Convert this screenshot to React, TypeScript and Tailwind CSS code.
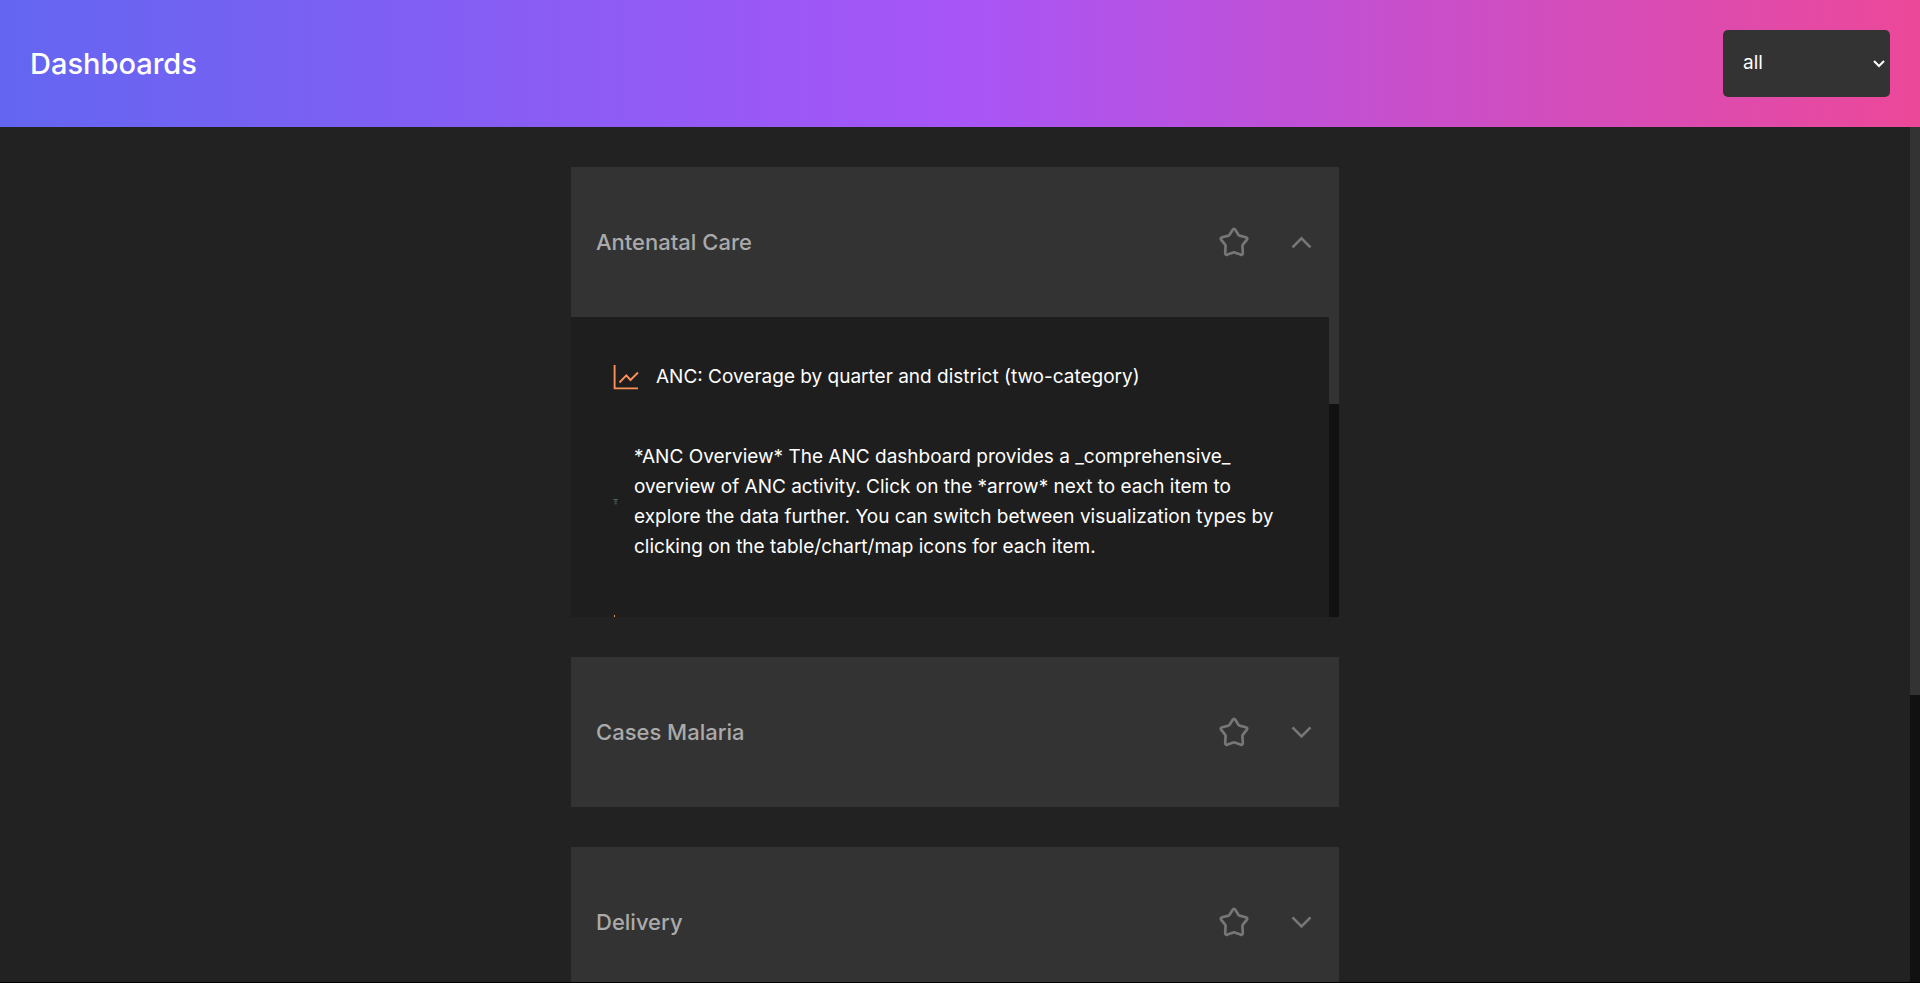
import { useState } from 'react';
import type { ReactNode } from 'react';

function StarIcon() {
  return (
    <svg viewBox="0 0 30 30" className="size-[30px]" fill="none" stroke="currentColor" strokeWidth="2.7" strokeLinejoin="round" aria-hidden="true">
      <path d="M13.7 2.7Q15 .8 16.3 2.7L19.4 7.7Q19.8 8.4 20.5 8.6L26.8 10.2Q29.2 10.9 27.7 12.9L23.9 17.7Q23.4 18.3 23.4 19L23.8 25.8Q23.8 28.4 21.5 27.6L15.7 25.4Q15 25.1 14.3 25.4L8.5 27.6Q6.2 28.4 6.2 25.8L6.6 19Q6.6 18.3 6.1 17.7L2.3 12.9Q.8 10.9 3.2 10.2L9.5 8.6Q10.2 8.4 10.6 7.7Z" />
    </svg>
  );
}

function ChevronIcon({ up }: { up: boolean }) {
  return (
    <svg viewBox="0 0 25 25" className="size-[25px]" fill="none" stroke="currentColor" strokeWidth="2.6" aria-hidden="true">
      <path d={up ? 'M3.5 17.4L12.5 8.4L21.5 17.4' : 'M3.5 7.4L12.5 16.4L21.5 7.4'} />
    </svg>
  );
}

function ChartIcon() {
  return (
    <svg viewBox="0 0 30 30" className="size-[30px] shrink-0 text-[#fb9159]" fill="none" stroke="currentColor" strokeWidth="1.9" aria-hidden="true">
      <path d="M3.6 3V26.4H27" />
      <path d="M8.5 20.5L15.3 13.3L19.5 18L27 10.5" />
    </svg>
  );
}

function TextIcon() {
  return (
    <svg viewBox="0 0 8 8" className="size-2 shrink-0" fill="none" stroke="#4a6357" aria-hidden="true">
      <path d="M2.3 1.5H7" />
      <path d="M4.7 1.5V6.5" strokeWidth="2.4" opacity=".6" />
    </svg>
  );
}

function ScrollTrack({ thumb }: { thumb: string }) {
  return (
    <div className="w-2.5 shrink-0 bg-[#111]" aria-hidden="true">
      <div className={`w-full bg-[#333] ${thumb}`} />
    </div>
  );
}

function DashboardCard({ name, initiallyOpen = false, children }: { name: string; initiallyOpen?: boolean; children?: ReactNode }) {
  const [open, setOpen] = useState(initiallyOpen);
  const [starred, setStarred] = useState(false);
  return (
    <section className="shrink-0">
      <div className="flex h-[150px] items-center gap-10 bg-[#333] px-[25px]">
        <h2 className="flex-1 text-[22px] font-medium text-[#aaa]">{name}</h2>
        <button type="button" aria-label={`Star ${name}`} aria-pressed={starred} onClick={() => setStarred(!starred)} className={starred ? 'text-amber-400' : 'text-[#777]'}>
          <StarIcon />
        </button>
        <button type="button" aria-label={`Toggle ${name}`} aria-expanded={open} onClick={() => setOpen(!open)} className="text-[#777]">
          <ChevronIcon up={open} />
        </button>
      </div>
      {open && children}
    </section>
  );
}

export default function App() {
  return (
    <div className="flex h-screen flex-col border-b border-black bg-[#222] font-['Inter',sans-serif] text-white">
      <header className="flex shrink-0 items-center justify-between bg-linear-to-r/srgb from-[#6366f1] via-[#a855f7] to-[#ec4899] p-[30px]">
        <h1 className="text-[29px] font-medium">Dashboards</h1>
        <div className="relative">
          <select aria-label="Filter items" defaultValue="all" className="h-[67px] w-[167px] appearance-none rounded-[5px] bg-[#333] px-5 text-[19px] text-white">
            <option value="all">all</option>
          </select>
          <svg viewBox="0 0 12 8" className="pointer-events-none absolute top-[30px] right-[5px] h-2 w-3" fill="none" stroke="currentColor" strokeWidth="2" aria-hidden="true">
            <path d="M1 1L6 6L11 1" />
          </svg>
        </div>
      </header>
      <div className="flex min-h-0 flex-1">
        <main className="min-w-0 flex-1 overflow-y-auto">
          <div className="mx-auto flex max-w-3xl flex-col gap-10 py-10">
            <DashboardCard name="Antenatal Care" initiallyOpen>
              <div className="flex h-[300px] bg-[#1e1e1e]">
                <ul className="flex min-w-0 flex-1 flex-col gap-[50px] overflow-hidden px-10 pt-[45px] text-[19px] leading-[30px]">
                  <li className="flex items-center gap-[15px]">
                    <ChartIcon />
                    <p>ANC: Coverage by quarter and district (two-category)</p>
                  </li>
                  <li className="flex items-center gap-[15px]">
                    <TextIcon />
                    <p>
                      *ANC Overview* The ANC dashboard provides a _comprehensive_ overview of ANC activity. Click on the *arrow* next to each item to explore the data
                      further. You can switch between visualization types by clicking on the table/chart/map icons for each item.
                    </p>
                  </li>
                  <li>
                    <svg viewBox="0 0 8 8" className="size-2" fill="none" stroke="#fb9159" aria-hidden="true">
                      <path d="M3.5 3V8" />
                    </svg>
                  </li>
                </ul>
                <ScrollTrack thumb="h-[29%]" />
              </div>
            </DashboardCard>
            <DashboardCard name="Cases Malaria" />
            <DashboardCard name="Delivery" />
          </div>
        </main>
        <ScrollTrack thumb="h-[66.4%]" />
      </div>
    </div>
  );
}
